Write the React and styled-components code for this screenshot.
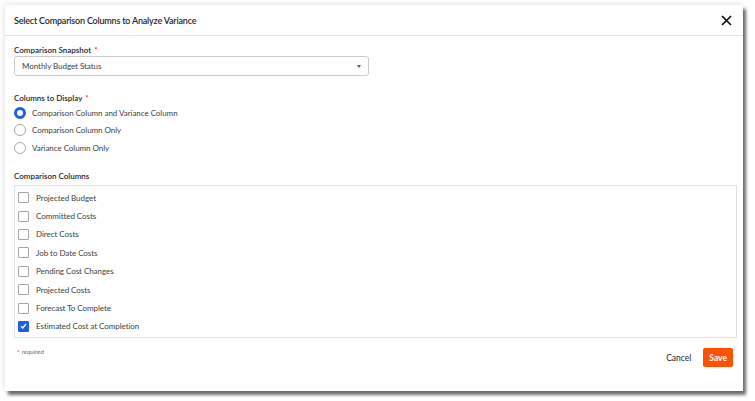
import React from "react"
import styled, { createGlobalStyle } from "styled-components"

const GlobalStyle = createGlobalStyle`
    html, body {
        margin: 0;
        padding: 0;
        background: #fff;
        font-family: Lato, "Open Sans", sans-serif;
        color: #232729;
    }
`

const Page = styled.div`
    width: 755px;
    height: 401px;
    padding: 5px 0 0 5px;
    box-sizing: border-box;
`

const Modal = styled.div`
    width: 738px;
    height: 386px;
    background: #fff;
    display: flex;
    flex-direction: column;
    box-shadow: 3px 4px 3px rgba(0, 0, 0, 0.55), 0 0 6px rgba(0, 0, 0, 0.15);
`

const Header = styled.div`
    height: 31px;
    display: flex;
    align-items: center;
    justify-content: space-between;
    padding: 1px 11px 0 9px;
    box-sizing: border-box;
    border-bottom: 1px solid #e3e5e6;
`

const Title = styled.h2`
    margin: 0;
    font-size: 9px;
    line-height: 12px;
    letter-spacing: -0.2px;
    font-weight: 600;
`

const CloseButton = styled.button`
    border: 0;
    background: none;
    padding: 0;
    display: flex;
    cursor: pointer;
`

const Body = styled.div`
    flex: 1;
    padding: 9px 6px 0 9px;
    display: flex;
    flex-direction: column;
`

const Label = styled.div`
    font-size: 8px;
    font-weight: 600;
    line-height: 11px;
    margin-top: ${p => p.top || 0}px;
    margin-bottom: ${p => p.bottom ?? 0}px;

    span {
        color: #e61920;
        font-size: 8px;
        vertical-align: top;
        margin-left: 3px;
    }
`

const Select = styled.div`
    width: 355px;
    height: 20px;
    box-sizing: border-box;
    border: 1px solid #c9cccf;
    border-radius: 3px;
    display: flex;
    align-items: center;
    justify-content: space-between;
    padding: 0 7px;
    font-size: 8px;
    letter-spacing: -0.05px;
    color: #3a3f42;
`

const Caret = styled.div`
    width: 0;
    height: 0;
    border-left: 2.5px solid transparent;
    border-right: 2.5px solid transparent;
    border-top: 3px solid #5a5f62;
`

const RadioGroup = styled.div`
    display: flex;
    flex-direction: column;
`

const RadioRow = styled.label`
    height: 17.5px;
    display: flex;
    align-items: center;
    gap: 6px;
    font-size: 8px;
    letter-spacing: -0.05px;
    color: #3a3f42;
`

const RadioCircle = styled.span`
    width: 12px;
    height: 12px;
    box-sizing: border-box;
    border-radius: 50%;
    border: ${p => (p.checked ? "3.5px solid #1d5ee8" : "1px solid #a3a7aa")};
    background: #fff;
    flex-shrink: 0;
`

const ListBox = styled.div`
    width: 723px;
    height: 153px;
    box-sizing: border-box;
    border: 1px solid #dfe1e3;
    overflow: hidden;
    padding: 3px 0 0 3px;
`

const CheckRow = styled.label`
    height: 18.4px;
    display: flex;
    align-items: center;
    gap: 7px;
    font-size: 8px;
    letter-spacing: -0.05px;
    color: #3a3f42;
`

const Box = styled.span`
    width: 11px;
    height: 11px;
    box-sizing: border-box;
    border-radius: 1px;
    border: 1px solid ${p => (p.checked ? "#1d5ee8" : "#a3a7aa")};
    background: ${p => (p.checked ? "#1d5ee8" : "#fff")};
    display: flex;
    align-items: center;
    justify-content: center;
    flex-shrink: 0;
`

const Footer = styled.div`
    display: flex;
    justify-content: space-between;
    align-items: flex-start;
    padding: 0 10px 0 12px;
    margin-top: 8px;
`

const Required = styled.div`
    font-size: 6.5px;
    font-style: italic;
    color: #6a6f72;
    padding-top: 1px;

    span {
        color: #e61920;
        font-style: normal;
        margin-right: 2px;
    }
`

const Actions = styled.div`
    display: flex;
    align-items: center;
    gap: 12px;
    margin-top: 1px;
`

const Button = styled.button`
    font-family: Lato, sans-serif;
    font-size: 8.5px;
    border: 0;
    border-radius: 2px;
    cursor: pointer;
    height: 19px;
    padding: 0 ${p => (p.primary ? 6 : 0)}px;
    background: ${p => (p.primary ? "#ff5100" : "transparent")};
    color: ${p => (p.primary ? "#fff" : "#232729")};
    font-weight: ${p => (p.primary ? 700 : 400)};
`

const radios = [
    { label: "Comparison Column and Variance Column", checked: true },
    { label: "Comparison Column Only" },
    { label: "Variance Column Only" },
]

const columns = [
    { label: "Projected Budget" },
    { label: "Committed Costs" },
    { label: "Direct Costs" },
    { label: "Job to Date Costs" },
    { label: "Pending Cost Changes" },
    { label: "Projected Costs" },
    { label: "Forecast To Complete" },
    { label: "Estimated Cost at Completion", checked: true },
]

const Check = () => (
    <svg width="7" height="6" viewBox="0 0 7 6">
        <path d="M1 3.2 L2.8 5 L6 1" fill="none" stroke="#fff" strokeWidth="1.4" />
    </svg>
)

const App = () => (
    <Page>
        <GlobalStyle />
        <Modal>
            <Header>
                <Title>Select Comparison Columns to Analyze Variance</Title>
                <CloseButton aria-label="Close">
                    <svg width="11" height="11" viewBox="0 0 11 11">
                        <path d="M1 1 L10 10 M10 1 L1 10" stroke="#111" strokeWidth="1.7" />
                    </svg>
                </CloseButton>
            </Header>
            <Body>
                <Label>Comparison Snapshot<span>*</span></Label>
                <Select>
                    Monthly Budget Status
                    <Caret />
                </Select>

                <Label top={17}>Columns to Display<span>*</span></Label>
                <RadioGroup>
                    {radios.map(r => (
                        <RadioRow key={r.label}>
                            <RadioCircle checked={r.checked} />
                            {r.label}
                        </RadioRow>
                    ))}
                </RadioGroup>

                <Label top={14} bottom={3}>Comparison Columns</Label>
                <ListBox>
                    {columns.map(c => (
                        <CheckRow key={c.label}>
                            <Box checked={c.checked}>{c.checked && <Check />}</Box>
                            {c.label}
                        </CheckRow>
                    ))}
                    {/* next row, scrolled out of view */}
                    <CheckRow aria-hidden="true">
                        <Box />
                    </CheckRow>
                </ListBox>
            </Body>
            <Footer>
                <Required><span>*</span>required</Required>
                <Actions>
                    <Button>Cancel</Button>
                    <Button primary>Save</Button>
                </Actions>
            </Footer>
            <div style={{ height: 24 }} />
        </Modal>
    </Page>
)

export default App
